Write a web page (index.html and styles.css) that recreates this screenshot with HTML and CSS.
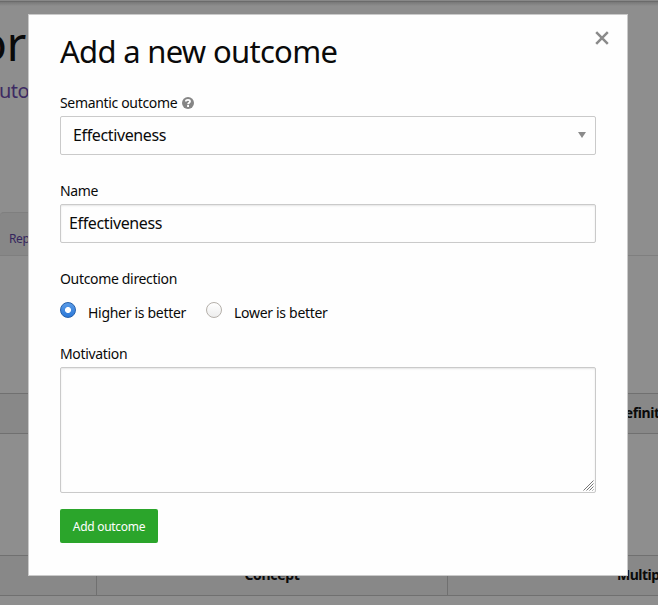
FILE: index.html
```html
<!DOCTYPE html>
<html lang="en">
<head>
<meta charset="utf-8">
<title>Add a new outcome</title>
<link rel="stylesheet" href="styles.css">
</head>
<body>
<main class="page">
  <div class="topbar"></div>
  <header class="heading">
    <div class="heading-title">ori</div>
    <div class="heading-author">utor</div>
  </header>
  <nav class="tabs"><div class="tab">Report</div></nav>
  <div class="row row-definition"><div class="cell"></div><div class="cell cell-definition">Definition</div></div>
  <div class="row row-concept"><div class="cell"></div><div class="cell cell-concept">Concept</div><div class="cell cell-multiple">Multiple</div></div>
</main>
<section class="modal">
  <button class="close" type="button" aria-label="Close"><svg width="14" height="14" viewBox="0 0 14 14"><path d="M1.2 1.2 12.8 12.8M12.8 1.2 1.2 12.8" stroke="#8a8a8a" stroke-width="2.5" fill="none"/></svg></button>
  <h1 class="title">Add a new outcome</h1>
  <div class="label">Semantic outcome
    <svg class="help" width="12" height="12" viewBox="0 0 12 12"><circle cx="6" cy="6" r="6" fill="#858585"/><path d="M3.8 4.5C4 2.4 8 2.4 8 4.5 8 5.8 6.1 5.8 6.1 7.3" fill="none" stroke="#fff" stroke-width="1.8"/><path d="M5.1 8.1h1.9v1.8H5.1z" fill="#fff"/></svg>
  </div>
  <div class="field select">Effectiveness<svg class="arrow" width="8" height="6" viewBox="0 0 8 6"><path d="M0 0h8L4 6z" fill="#8a8a8a"/></svg></div>
  <div class="label">Name</div>
  <div class="field input">Effectiveness</div>
  <div class="label">Outcome direction</div>
  <div class="options">
    <span class="radio radio-on"></span><span class="option-text option-higher">Higher is better</span>
    <span class="radio"></span><span class="option-text">Lower is better</span>
  </div>
  <div class="label">Motivation</div>
  <div class="area"><svg class="grip" width="11" height="11" viewBox="0 0 11 11"><path d="M.5 10.5l10-10M3.5 10.5l7-7M6.5 10.5l4-4M9.5 10.5l1-1" stroke="#777" stroke-width="1"/></svg></div>
  <button class="submit" type="button">Add outcome</button>
</section>
</body>
</html>
```
FILE: styles.css
```css
* { box-sizing: border-box; }
body {
  margin: 0;
  width: 658px;
  height: 605px;
  overflow: hidden;
  position: relative;
  background: #8e8e8e;
  color: #0a0a0a;
  font-family: "Noto Sans", sans-serif;
}
.page { height: 605px; overflow: hidden; }
.topbar {
  height: 6px;
  background: linear-gradient(#888 0 1px, #6b6b6b 1px 2px, #787878 2px, #8e8e8e 6px);
}
.heading { height: 206px; white-space: nowrap; }
.heading-title {
  padding-top: 3px;
  margin-left: -22px;
  height: 67px;
  font-size: 48px;
  line-height: 67px;
  letter-spacing: -0.5px;
}
.heading-author {
  height: 36px;
  margin-left: -1px;
  font-size: 20px;
  line-height: 36px;
  letter-spacing: -0.6px;
  color: #3d2a63;
}
.tabs { height: 44px; border-bottom: 1px solid #7f7f7f; }
.tab {
  width: 60px;
  height: 43px;
  padding: 14px 0 0 9px;
  border-top: 1px solid #7f7f7f;
  border-radius: 4px 0 0 0;
  background: #878787;
  color: #36265e;
  font-size: 12px;
  line-height: 24px;
  letter-spacing: -0.4px;
}
.row {
  display: grid;
  height: 41px;
  border: solid #707070;
  border-width: 1px 0;
  background: #888;
  font-size: 14px;
  line-height: 38px;
  font-weight: 700;
}
.row-definition { grid-template-columns: 500px 1fr; margin-top: 137px; }
.row-concept { grid-template-columns: 96px 351px 1fr; margin-top: 121px; }
.row-concept .cell + .cell { border-left: 1px solid #707070; }
.cell { white-space: nowrap; overflow: hidden; }
.cell-definition { padding-left: 115px; letter-spacing: -0.4px; }
.cell-concept { text-align: center; letter-spacing: -0.3px; }
.cell-multiple { padding-left: 169px; letter-spacing: -0.5px; }

.modal {
  position: absolute;
  left: 28px;
  top: 14px;
  width: 600px;
  height: 562px;
  padding: 15px 31px 31px;
  border: 1px solid #cacaca;
  background: #fefefe;
}
.close {
  position: absolute;
  top: 16px;
  right: 18px;
  width: 14px;
  height: 14px;
  padding: 0;
  border: 0;
  background: none;
}
.close svg { display: block; }
.title {
  height: 45px;
  margin: 0 0 16px;
  font-size: 31px;
  line-height: 43px;
  font-weight: 400;
  letter-spacing: -0.7px;
  white-space: nowrap;
}
.label {
  display: flex;
  align-items: center;
  gap: 5px;
  height: 25px;
  padding-bottom: 2px;
  font-size: 14px;
  line-height: 23px;
  letter-spacing: -0.33px;
}
.field {
  display: flex;
  align-items: center;
  justify-content: space-between;
  height: 39px;
  padding-bottom: 2px;
  margin-bottom: 24px;
  border: 1px solid #cacaca;
  border-radius: 2px;
  font-size: 16px;
  line-height: 22px;
  letter-spacing: -0.37px;
}
.select { padding-left: 12px; padding-right: 9px; }
.input { padding-left: 8px; box-shadow: inset 0 1px 2px rgba(10, 10, 10, 0.1); }
.options {
  display: flex;
  height: 50px;
  padding-top: 10px;
  font-size: 14px;
  line-height: 22px;
  letter-spacing: -0.3px;
  white-space: nowrap;
}
.radio {
  width: 16px;
  height: 16px;
  flex: none;
  border: 1px solid #b5b0aa;
  border-radius: 50%;
  background: linear-gradient(#fff, #ededed);
}
.radio-on {
  border-color: #2560ab;
  background: radial-gradient(circle, #fff 0 2.6px, transparent 3.4px), linear-gradient(#5a9be8, #2b78d8);
}
.option-text { padding-left: 12px; }
.option-higher { width: 130px; }
.area {
  display: flex;
  align-items: flex-end;
  justify-content: flex-end;
  height: 126px;
  padding: 1px;
  margin-bottom: 16px;
  border: 1px solid #cacaca;
  border-radius: 2px;
  box-shadow: inset 0 1px 2px rgba(10, 10, 10, 0.1);
}
.submit {
  display: block;
  width: 98px;
  height: 34px;
  padding: 1px 0 0;
  border: 0;
  border-radius: 2px;
  background: #2ba52b;
  color: #fefefe;
  font: 12px/34px "Noto Sans", sans-serif;
  letter-spacing: -0.3px;
}
```
